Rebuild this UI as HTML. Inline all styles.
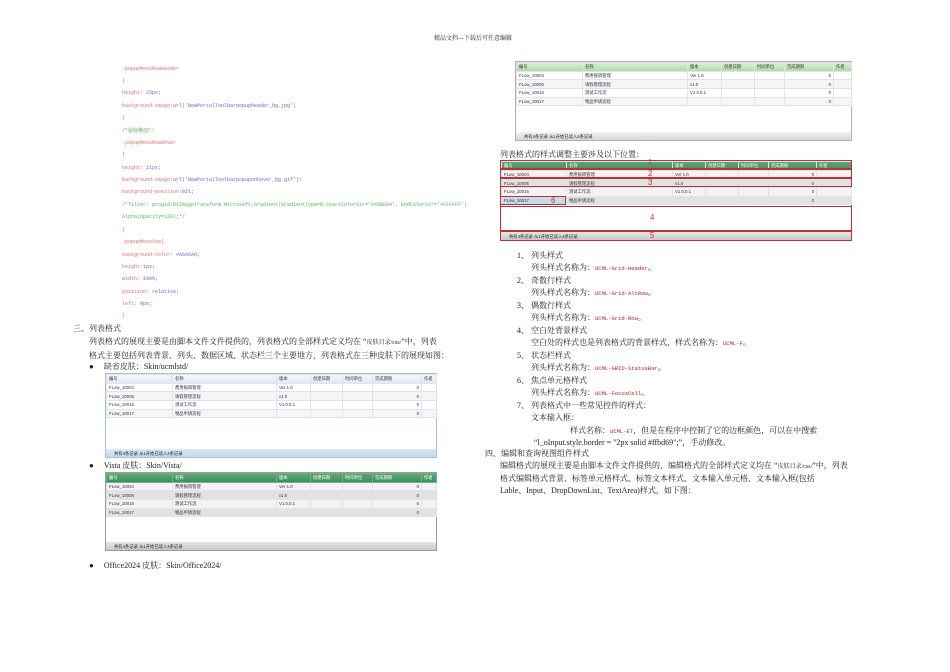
<!DOCTYPE html>
<html><head><meta charset="utf-8"><style>
*{margin:0;padding:0;box-sizing:border-box}
body{width:950px;height:672px;background:#fff;position:relative;overflow:hidden;font-family:"Liberation Serif","Noto Serif CJK SC",serif;color:#222}
.a{position:absolute;white-space:nowrap}
.c{font-family:"Liberation Mono","Noto Sans CJK SC",monospace;font-size:5px;color:#e07070;left:122px}
.c b{font-weight:normal;color:#6070d0}
.c.g{color:#60b060}
.t{font-size:8px;line-height:10px}
.r{font-family:"Liberation Mono",monospace;font-size:5.5px;color:#c02020}
table{position:absolute;border-collapse:collapse;table-layout:fixed;font-family:"Liberation Sans","Noto Sans CJK SC",sans-serif;font-size:4.3px;color:#333}
tr{height:8.7px}
td{height:8.7px;line-height:7px;border:1px solid #dfe4ea;padding:0 2px;overflow:hidden;white-space:nowrap;vertical-align:middle}
.wrap{position:absolute;border:1px solid #a8c0d8;background:#fff}
.sb{position:absolute;left:0;right:0;bottom:0;height:8px;font-family:"Liberation Sans","Noto Sans CJK SC",sans-serif;font-size:4.3px;padding:1.5px 8px}
.rn{text-align:right}
</style></head><body>
<div class="a" style="left:434px;top:33px;font-size:6px">精品文档---下载后可任意编辑</div>

<div class="a c" style="top:66px">.popupMenuRowHeader</div>
<div class="a c" style="top:78px">{</div>
<div class="a c" style="top:90px">height: <b>23px;</b></div>
<div class="a c" style="top:103px">background-image:<b>url('NewPortalToolbarpopupheader_bg.jpg')</b></div>
<div class="a c" style="top:115px">}</div>
<div class="a c g" style="top:127px">/*鼠标移动*/</div>
<div class="a c" style="top:140px">.popupMenuRowHover</div>
<div class="a c" style="top:152px">{</div>
<div class="a c" style="top:165px">height: <b>21px;</b></div>
<div class="a c" style="top:177px">background-image:<b>url('NewPortalToolbarpopuponhover_bg.gif');</b></div>
<div class="a c" style="top:189px">background-position:<b>021;</b></div>
<div class="a c g" style="top:202px">/*filter: progid:DXImageTransform.Microsoft.Gradient(GradientType=0,StartColorStr='#45B684', EndColorStr='#FFFFFF')</div>
<div class="a c g" style="top:214px">Alpha(opacity=120);*/</div>
<div class="a c" style="top:227px">}</div>
<div class="a c" style="top:239px">.popupMenuSep{</div>
<div class="a c" style="top:252px">background-color: <b>#A6A6A6;</b></div>
<div class="a c" style="top:264px">height:<b>1px;</b></div>
<div class="a c" style="top:276px">width: <b>100%;</b></div>
<div class="a c" style="top:289px">position: <b>relative;</b></div>
<div class="a c" style="top:301px">left: <b>0px;</b></div>
<div class="a c" style="top:313px">}</div>

<div class="a t" style="left:73px;top:324px">三、列表格式</div>
<div class="a t" style="left:89px;top:337px">列表格式的展现主要是由脚本文件文件提供的，列表格式的全部样式定义均在 “<span style="font-size:6px">皮肤目录/css/</span>”中，列表</div>
<div class="a t" style="left:89px;top:351px">格式主要包括列表背景、列头、数据区域、状态栏三个主要地方，列表格式在三种皮肤下的展现如图：</div>
<div class="a t" style="left:89px;top:362px">●&nbsp;&nbsp;&nbsp;&nbsp;&nbsp;缺省皮肤：Skin/ucmlstd/</div>

<div class="wrap" style="left:105px;top:373px;width:332px;height:85px">
<table style="left:0;top:0;width:330px">
<colgroup><col style="width:66px"><col style="width:104px"><col style="width:34px"><col style="width:32px"><col style="width:30px"><col style="width:49px"><col style="width:15px"></colgroup>
<tr style="background:linear-gradient(#f4f7fb,#dfe7f1)"><td>编号</td><td>名称</td><td>版本</td><td>创建日期</td><td>时间单位</td><td>完成期限</td><td>作者</td></tr>
<tr><td>FLow_10004</td><td>费用报销管理</td><td>Ver 1.0</td><td></td><td></td><td class="rn">0</td><td></td></tr>
<tr style="background:#f3f5f8"><td>FLow_10005</td><td>请假管理流程</td><td>v1.0</td><td></td><td></td><td class="rn">0</td><td></td></tr>
<tr><td>FLow_10016</td><td>测试工作流</td><td>V1.0.0.1</td><td></td><td></td><td class="rn">0</td><td></td></tr>
<tr style="background:#f3f5f8"><td>FLow_10017</td><td>物品申请流程</td><td></td><td></td><td></td><td class="rn">0</td><td></td></tr>
</table>
<div class="sb" style="background:linear-gradient(#dbe8f6,#c5d8ee)">共有4条记录 从1开始已读入4条记录</div>
</div>

<div class="a t" style="left:89px;top:461px">●&nbsp;&nbsp;&nbsp;&nbsp;&nbsp;Vista 皮肤：Skin/Vista/</div>
<div class="wrap" style="left:105px;top:472px;width:332px;height:79px;border-color:#999">
<table style="left:0;top:0;width:330px">
<colgroup><col style="width:66px"><col style="width:104px"><col style="width:34px"><col style="width:32px"><col style="width:30px"><col style="width:49px"><col style="width:15px"></colgroup>
<tr style="background:linear-gradient(#5aa876,#3c8a5a);color:#fff"><td style="border-color:#6bb585">编号</td><td style="border-color:#6bb585">名称</td><td style="border-color:#6bb585">版本</td><td style="border-color:#6bb585">创建日期</td><td style="border-color:#6bb585">时间单位</td><td style="border-color:#6bb585">完成期限</td><td style="border-color:#6bb585">作者</td></tr>
<tr style="background:#f3f3f3"><td>FLow_10004</td><td>费用报销管理</td><td>Ver 1.0</td><td></td><td></td><td class="rn">0</td><td></td></tr>
<tr style="background:#e2e2e2"><td>FLow_10005</td><td>请假管理流程</td><td>v1.0</td><td></td><td></td><td class="rn">0</td><td></td></tr>
<tr style="background:#f3f3f3"><td>FLow_10016</td><td>测试工作流</td><td>V1.0.0.1</td><td></td><td></td><td class="rn">0</td><td></td></tr>
<tr style="background:#e2e2e2"><td>FLow_10017</td><td>物品申请流程</td><td></td><td></td><td></td><td class="rn">0</td><td></td></tr>
</table>
<div class="sb" style="background:linear-gradient(#e6e6e6,#c8c8c8)">共有4条记录 从1开始已读入4条记录</div>
</div>

<div class="a t" style="left:89px;top:561px">●&nbsp;&nbsp;&nbsp;&nbsp;&nbsp;Office2024 皮肤：Skin/Office2024/</div>

<div class="wrap" style="left:515px;top:61px;width:337px;height:80px;border-color:#b0b0b0">
<table style="left:0;top:0;width:335px">
<colgroup><col style="width:66px"><col style="width:105px"><col style="width:34px"><col style="width:33px"><col style="width:30px"><col style="width:49px"><col style="width:18px"></colgroup>
<tr style="background:linear-gradient(#d8f0d2,#a8dba0)"><td>编号</td><td>名称</td><td>版本</td><td>创建日期</td><td>时间单位</td><td>完成期限</td><td>作者</td></tr>
<tr><td>FLow_10004</td><td>费用报销管理</td><td>Ver 1.0</td><td></td><td></td><td class="rn">0</td><td></td></tr>
<tr style="background:#f3f5f8"><td>FLow_10005</td><td>请假管理流程</td><td>v1.0</td><td></td><td></td><td class="rn">0</td><td></td></tr>
<tr><td>FLow_10016</td><td>测试工作流</td><td>V1.0.0.1</td><td></td><td></td><td class="rn">0</td><td></td></tr>
<tr style="background:#f3f5f8"><td>FLow_10017</td><td>物品申请流程</td><td></td><td></td><td></td><td class="rn">0</td><td></td></tr>
</table>
<div class="sb" style="background:linear-gradient(#f0f0f0,#d8d8d8)">共有4条记录 从1开始已读入4条记录</div>
</div>

<div class="a t" style="left:500px;top:150px">列表格式的样式调整主要涉及以下位置：</div>
<div class="wrap" style="left:500px;top:160px;width:352px;height:81px;border:1px solid #c03030">
<table style="left:0;top:0;width:350px">
<colgroup><col style="width:65px"><col style="width:106px"><col style="width:33px"><col style="width:33px"><col style="width:30px"><col style="width:48px"><col style="width:35px"></colgroup>
<tr style="background:linear-gradient(#5aa876,#3c8a5a);color:#fff"><td>编号</td><td>名称</td><td>版本</td><td>创建日期</td><td>时间单位</td><td>完成期限</td><td>作者</td></tr>
<tr style="background:#f3f3f3"><td>FLow_10004</td><td>费用报销管理</td><td>Ver 1.0</td><td></td><td></td><td class="rn">0</td><td></td></tr>
<tr style="background:#e2e2e2"><td>FLow_10005</td><td>请假管理流程</td><td>v1.0</td><td></td><td></td><td class="rn">0</td><td></td></tr>
<tr style="background:#f3f3f3"><td>FLow_10016</td><td>测试工作流</td><td>V1.0.0.1</td><td></td><td></td><td class="rn">0</td><td></td></tr>
<tr style="background:#e2e2e2"><td style="background:#c4dceb">FLow_10017</td><td>物品申请流程</td><td></td><td></td><td></td><td class="rn">0</td><td></td></tr>
</table>
<div class="sb" style="background:linear-gradient(#e6e6e6,#c8c8c8);height:8px;padding-top:1.5px">共有4条记录 从1开始已读入4条记录</div>
</div>
<div class="a" style="left:500px;top:160px;width:352px;height:9px;border:1px solid #c03030"></div>
<div class="a" style="left:500px;top:169px;width:352px;height:9px;border:1px solid #c03030"></div>
<div class="a" style="left:500px;top:178px;width:352px;height:9px;border:1px solid #c03030"></div>
<div class="a" style="left:500px;top:196px;width:66px;height:9px;border:1px solid #c03030"></div>
<div class="a" style="left:500px;top:206px;width:352px;height:25px;border:1px solid #c03030"></div>
<div class="a" style="left:500px;top:231px;width:352px;height:10px;border:1px solid #c03030"></div>
<div class="a" style="left:648px;top:159px;font:7px 'Liberation Sans';color:#d03030">1</div>
<div class="a" style="left:648px;top:169px;font:8px 'Liberation Sans';color:#d03030">2</div>
<div class="a" style="left:648px;top:178px;font:8px 'Liberation Sans';color:#d03030">3</div>
<div class="a" style="left:650px;top:213px;font:8px 'Liberation Sans';color:#d03030">4</div>
<div class="a" style="left:650px;top:231px;font:8px 'Liberation Sans';color:#d03030">5</div>
<div class="a" style="left:551px;top:196px;font:8px 'Liberation Sans';color:#d03030">6</div>

<div class="a t" style="left:517px;top:251px">1、&nbsp;列头样式</div>
<div class="a t" style="left:531px;top:263px">列头样式名称为：<span class="r">UCML-Grid-Header</span>。</div>
<div class="a t" style="left:517px;top:276px">2、&nbsp;奇数行样式</div>
<div class="a t" style="left:531px;top:288px">列头样式名称为：<span class="r">UCML-Grid-AltRow</span>。</div>
<div class="a t" style="left:517px;top:301px">3、&nbsp;偶数行样式</div>
<div class="a t" style="left:531px;top:313px">列头样式名称为：<span class="r">UCML-Grid-Row</span>。</div>
<div class="a t" style="left:517px;top:326px">4、&nbsp;空白处背景样式</div>
<div class="a t" style="left:531px;top:338px">空白处的样式也是列表格式的背景样式，样式名称为：<span class="r">UCML-F</span>。</div>
<div class="a t" style="left:517px;top:351px">5、&nbsp;状态栏样式</div>
<div class="a t" style="left:531px;top:363px">列头样式名称为：<span class="r">UCML-GRID-StatusBar</span>。</div>
<div class="a t" style="left:517px;top:376px">6、&nbsp;焦点单元格样式</div>
<div class="a t" style="left:531px;top:388px">列头样式名称为：<span class="r">UCML-FocusCell</span>。</div>
<div class="a t" style="left:517px;top:401px">7、&nbsp;列表格式中一些常见控件的样式：</div>
<div class="a t" style="left:531px;top:413px">文本输入框：</div>
<div class="a t" style="left:570px;top:426px">样式名称：<span class="r">UCML-ET</span>，但是在程序中控制了它的边框颜色，可以在中搜索</div>
<div class="a t" style="left:534px;top:438px">“l_oInput.style.border = "2px solid #ffbd69";”，手动修改。</div>
<div class="a t" style="left:485px;top:449px">四、编辑和查询视图组件样式</div>
<div class="a t" style="left:500px;top:461px">编辑格式的展现主要是由脚本文件文件提供的，编辑格式的全部样式定义均在 “<span style="font-size:6px">皮肤目录/css/</span>”中，列表</div>
<div class="a t" style="left:500px;top:474px">格式编辑格式背景、标签单元格样式、标签文本样式、文本输入单元格、文本输入框(包括</div>
<div class="a t" style="left:500px;top:486px">Lable、Input、DropDownList、TextArea)样式，如下图：</div>
</body></html>
